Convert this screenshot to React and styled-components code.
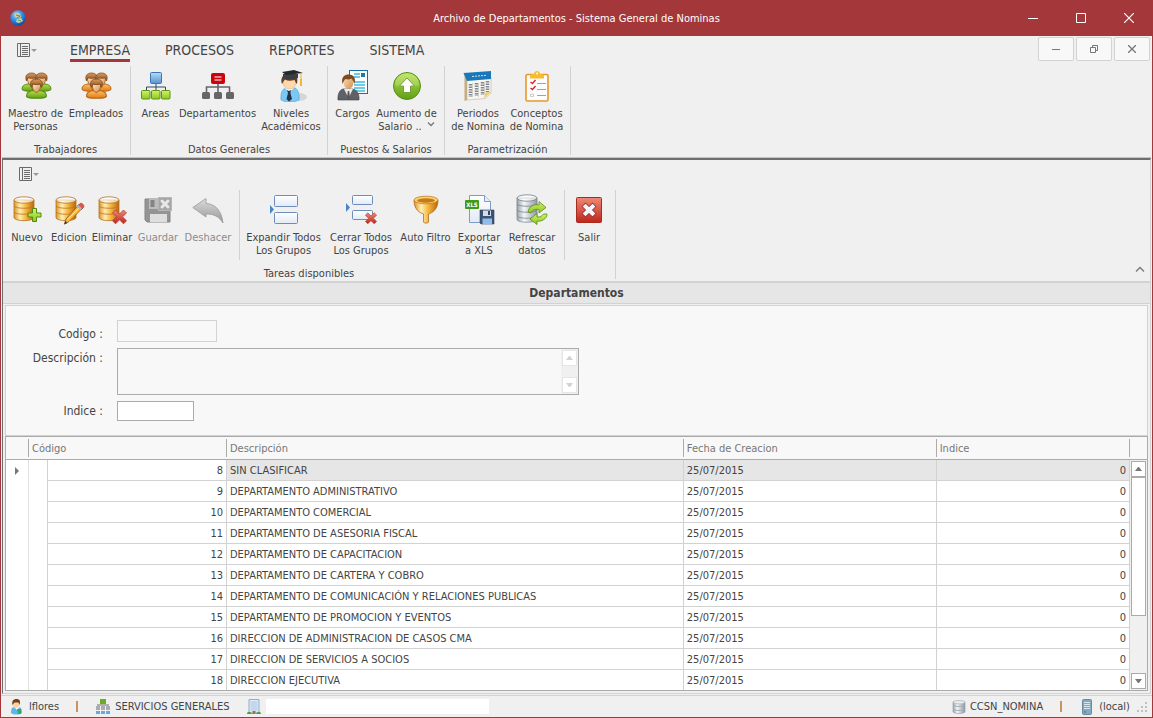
import React, {useState} from 'react';
import styled, {createGlobalStyle, css} from 'styled-components';

const GlobalStyle = createGlobalStyle`
  * {
    box-sizing: border-box;
  }
  body {
    margin: 0;
    background: #f0f0f0;
    color: #444;
    font-family: Tahoma, "DejaVu Sans Condensed", "Noto Sans", sans-serif;
    font-size: 11px;
    line-height: 13px;
  }
  button, input, textarea {
    font: inherit;
    color: inherit;
    margin: 0;
    padding: 0;
  }
  button {
    border: 0;
    background: none;
  }
  svg {
    display: block;
    flex: none;
  }
`

const Window = styled.div`
  min-height: 100vh;
  display: flex;
  flex-direction: column;
  background: #f0f0f0;
  border: 1px solid #a4373a;
  border-top: 0;
`

const TitleBar = styled.header`
  height: 36px;
  display: grid;
  grid-template-columns: 1fr auto 1fr;
  align-items: center;
  margin: 0 -1px;
  background: #a4373a;
  color: #fff;
`

const AppIcon = styled.div`
  padding-left: 10px;
`

const WindowTitle = styled.h1`
  margin: 0;
  font-size: 11px;
  font-weight: normal;
`

const WindowButtons = styled.div`
  display: flex;
  justify-content: flex-end;
`

const WindowButton = styled.button`
  width: 48px;
  height: 36px;
  display: flex;
  align-items: center;
  justify-content: center;
`

const TabBar = styled.nav`
  height: 30px;
  display: flex;
  align-items: flex-start;
  padding: 0 2px 0 16px;
`

const MenuButton = styled.button`
  width: 20px;
  height: 28px;
  display: flex;
  align-items: center;
`

const Tabs = styled.div`
  flex: 1;
  display: flex;
  gap: 35px;
  padding-left: 33px;
`

const Tab = styled.button`
  height: 26px;
  padding-top: 4px;
  font-size: 14px;
  line-height: 18px;
  border-bottom: 3px solid ${props => props.$active ? '#a4373a' : 'transparent'};
`

const MdiButtons = styled.div`
  display: flex;
  gap: 2px;
  padding-top: 1px;
`

const MdiButton = styled.button`
  width: 36px;
  height: 24px;
  display: flex;
  align-items: center;
  justify-content: center;
  background: #f8f8f8;
  border: 1px solid #d2d2d2;
  border-radius: 2px;
`

const Ribbon = styled.div`
  display: flex;
  padding-bottom: 2px;
`

const RibbonGroup = styled.section`
  border-right: 1px solid #d2d2d2;
`

const RibbonButtons = styled.div`
  display: flex;
  padding: 4px 4px 0;
`

const RibbonButton = styled.button`
  width: ${props => props.$width}px;
  height: 66px;
  display: flex;
  flex-direction: column;
  align-items: center;
  gap: 5px;
  white-space: pre;
  &:disabled {
    color: #8c8c8c;
  }
`

const GroupLabel = styled.div`
  padding-top: 9px;
  line-height: 10px;
  text-align: center;
`

const SubGroups = styled.div`
  display: flex;
`

const SubGroup = styled.div`
  display: flex;
  padding: 4px 5px 0 3px;
  & + & {
    border-left: 1px solid #d2d2d2;
  }
`

const Child = styled.main`
  flex: 1;
  display: flex;
  flex-direction: column;
  margin: 1px 1px 0;
  border: 1px solid #d2d2d2;
  border-top: 2px solid #6e6e6e;
  border-left: 1px solid #6e6e6e;
  box-shadow: 0 -1px #c4c4c4;
`

const ChildMenu = styled.div`
  height: 30px;
  padding-left: 16px;
`

const ChildRibbon = styled.div`
  display: flex;
  align-items: flex-end;
  justify-content: space-between;
  padding: 0 3px 2px 0;
  border-bottom: 2px solid #d2d2d2;
`

const CollapseButton = styled.button`
  width: 12px;
  height: 20px;
`

const SectionTitle = styled.h2`
  margin: 0;
  height: 21px;
  font-size: 12px;
  line-height: 20px;
  text-align: center;
  background: #e6e6e6;
  border-bottom: 1px solid #d2d2d2;
`

const Panel = styled.div`
  flex: 1;
  display: flex;
  flex-direction: column;
  margin: 1px 2px 2px;
`

const Form = styled.form`
  display: grid;
  grid-template-columns: 97px 1fr;
  column-gap: 14px;
  row-gap: 6px;
  align-items: start;
  padding: 14px 0;
  background: #f8f8f8;
  border: 1px solid #d2d2d2;
  font-size: 12px;
`

const Label = styled.label`
  align-self: ${props => props.$end ? 'end' : 'start'};
  padding-top: 2px;
  line-height: 16px;
  text-align: right;
  white-space: pre;
`

const fieldBorder = css`
  border: 1px solid #ababab;
  border-radius: 0;
  outline: 0;
`

const TextInput = styled.input`
  ${fieldBorder}
  width: ${props => props.$width}px;
  height: 20px;
  background: #fff;
  &:disabled {
    height: 22px;
    background: #f8f8f8;
    border-color: #d2d2d2;
  }
`

const MemoBox = styled.div`
  ${fieldBorder}
  width: 100%;
  max-width: 462px;
  height: 47px;
  display: flex;
`

const Memo = styled.textarea`
  flex: 1;
  border: 0;
  outline: 0;
  resize: none;
  overflow: hidden;
  background: #f8f8f8;
`

const MemoScroll = styled.div`
  width: 17px;
  display: flex;
  flex-direction: column;
  justify-content: space-between;
  padding: 1px;
  background: #f0f0f0;
`

const ArrowButton = styled.button`
  width: 15px;
  height: 16px;
  flex: none;
  display: flex;
  align-items: center;
  justify-content: center;
  color: ${props => props.disabled ? '#d2d2d2' : '#777'};
  background: #fff;
  border: 1px solid ${props => props.disabled ? '#e6e6e6' : '#ababab'};
`

const GridBox = styled.div`
  flex: 1;
  display: flex;
  background: #fff;
  border: 1px solid #ababab;
`

const Table = styled.table`
  flex: 1;
  width: 100%;
  align-self: flex-start;
  table-layout: fixed;
  border-collapse: separate;
  border-spacing: 0;
`

const Col = styled.col`
  width: ${props => props.$width};
`

const Th = styled.th`
  height: 23px;
  padding: 2px 0;
  font-weight: normal;
  text-align: left;
  color: #777;
  background: #f8f8f8;
  border-bottom: 1px solid #ababab;
  & > span {
    display: block;
    height: 18px;
    padding-left: 3px;
    line-height: 19px;
    border-right: 1px solid #ababab;
  }
`

const Td = styled.td`
  height: 21px;
  padding: 0 3px;
  text-align: ${props => props.$right ? 'right' : 'left'};
  white-space: nowrap;
  overflow: hidden;
  background: ${props => props.$selected ? '#e6e6e6' : '#fff'};
  border-right: 1px solid #d2d2d2;
  border-bottom: 1px solid #d2d2d2;
  tr:last-child > & {
    height: 20px;
    border-bottom: 0;
  }
`

const MarkerTd = styled.td`
  padding: 0 0 0 9px;
  border-right: 1px solid #e0e0e0;
`

const IndentTd = styled.td`
  border-right: 1px solid #d2d2d2;
`

const GridSide = styled.div`
  width: 17px;
  display: flex;
  flex-direction: column;
`

const SideHeader = styled.div`
  height: 23px;
  background: #f8f8f8;
  border-bottom: 1px solid #ababab;
`

const ScrollTrack = styled.div`
  flex: 1;
  display: flex;
  flex-direction: column;
  align-items: center;
  padding: 1px;
  background: #f0f0f0;
`

const TrackBody = styled.div`
  flex: 1;
  width: 15px;
`

const Thumb = styled.div`
  height: 71%;
  background: #fff;
  border: 1px solid #ababab;
`

const StatusBar = styled.footer`
  height: 22px;
  display: flex;
  justify-content: space-between;
  margin-top: 1px;
  border-top: 1px solid #d2d2d2;
`

const StatusSide = styled.div`
  display: flex;
  align-items: center;
  gap: 17px;
  padding: 0 4px 0 8px;
`

const StatusItem = styled.div`
  display: flex;
  align-items: center;
  gap: 4px;
`

const StatusBlank = styled.div`
  width: 223px;
  height: 15px;
  background: #fff;
`

const StatusRule = styled.div`
  width: 2px;
  height: 11px;
  background: #c8935c;
`

function Defs() {
  return (
    <svg width="0" height="0" aria-hidden="true">
      <defs>
        <linearGradient id="gold" x1="0" x2="1" y1="0" y2="0">
          <stop offset="0" stopColor="#e0912a" />
          <stop offset=".3" stopColor="#fff0b4" />
          <stop offset=".6" stopColor="#f5b53c" />
          <stop offset="1" stopColor="#b9650f" />
        </linearGradient>
        <linearGradient id="silver" x1="0" x2="1" y1="0" y2="0">
          <stop offset="0" stopColor="#9aa3ad" />
          <stop offset=".35" stopColor="#f5f7f9" />
          <stop offset="1" stopColor="#8d97a2" />
        </linearGradient>
        <linearGradient id="green" x1="0" x2="0" y1="0" y2="1">
          <stop offset="0" stopColor="#b6e04a" />
          <stop offset="1" stopColor="#5f9f16" />
        </linearGradient>
        <linearGradient id="lime" x1="0" x2="0" y1="0" y2="1">
          <stop offset="0" stopColor="#d4f06a" />
          <stop offset="1" stopColor="#8cc81e" />
        </linearGradient>
        <linearGradient id="orange" x1="0" x2="0" y1="0" y2="1">
          <stop offset="0" stopColor="#ffc062" />
          <stop offset="1" stopColor="#dd7a18" />
        </linearGradient>
        <linearGradient id="blue" x1="0" x2="0" y1="0" y2="1">
          <stop offset="0" stopColor="#b5dcf7" />
          <stop offset="1" stopColor="#5794d0" />
        </linearGradient>
        <linearGradient id="red" x1="0" x2="0" y1="0" y2="1">
          <stop offset="0" stopColor="#f08a78" />
          <stop offset="1" stopColor="#bd251b" />
        </linearGradient>
        <linearGradient id="paper" x1="0" x2="0" y1="0" y2="1">
          <stop offset="0" stopColor="#fff" />
          <stop offset="1" stopColor="#e2eaf6" />
        </linearGradient>
        <linearGradient id="grey" x1="0" x2="0" y1="0" y2="1">
          <stop offset="0" stopColor="#dcdcdc" />
          <stop offset="1" stopColor="#969696" />
        </linearGradient>
        <linearGradient id="hair" x1="0" x2="0" y1="0" y2="1">
          <stop offset="0" stopColor="#d79a5c" />
          <stop offset="1" stopColor="#8a4c1c" />
        </linearGradient>
        <linearGradient id="skin" x1="0" x2="1" y1="0" y2="1">
          <stop offset="0" stopColor="#ffe3bd" />
          <stop offset="1" stopColor="#d08d50" />
        </linearGradient>
        <radialGradient id="globe" cx=".4" cy=".3" r=".7">
          <stop offset="0" stopColor="#8fd0ff" />
          <stop offset=".6" stopColor="#2b86e0" />
          <stop offset="1" stopColor="#0b4da4" />
        </radialGradient>
      </defs>
    </svg>
  )
}

function Icon({size = 32, children}) {
  return <svg width={size} height={size} viewBox={`0 0 ${size} ${size}`} fill="none" aria-hidden="true">{children}</svg>
}

function Person({x, y, fill, stroke}) {
  return (
    <g transform={`translate(${x} ${y})`}>
      <path d="M-.5 16.500c0-4 2.500-5 6-5.500h7c3.500 .5 6 1.500 6 5.500-1.500 2.500-17.500 2.500-19 0z" fill={fill} stroke={stroke} />
      <path d="M6 10.500 9 14.500l3-4V9H6z" fill="#d9985d" />
      <path d="M5 5c0 4 1.500 7.500 4 7.500S13 9 13 5z" fill="url(#skin)" stroke="#8d5223" strokeWidth=".7" />
      <path d="M4 8C2 3 4.500 0 9 0s7 3 5 8c-.8-.5-1-2.500-1.800-3.500-2 1-4.500 1-6.300 0C5 5.500 4.800 7.500 4 8z" fill="url(#hair)" stroke="#7b431a" strokeWidth=".7" />
    </g>
  )
}

function PeopleIcon({fill, stroke}) {
  return (
    <Icon>
      <Person x={2.500} y={3} fill={fill} stroke={stroke} />
      <Person x={12.500} y={3} fill={fill} stroke={stroke} />
      <g transform="translate(7 8) scale(1.050)"><Person x={0} y={1} fill={fill} stroke={stroke} /></g>
    </Icon>
  )
}

function AreasIcon() {
  return (
    <Icon>
      <path d="M16 13v4M6.500 20v-3h19v3M16 17v3" stroke="#33486b" />
      <rect x="10.500" y="2.500" width="11" height="11" rx="1" fill="url(#blue)" stroke="#3d76b4" />
      {[1.5, 11.5, 21.5].map((x) => (
        <rect key={x} x={x} y="20.500" width="8.500" height="8.500" rx="1" fill="url(#lime)" stroke="#5c9415" />
      ))}
    </Icon>
  )
}

function DepartmentsIcon() {
  return (
    <Icon>
      <path d="M16 13v9M4.500 22v-5h23v5" stroke="#666" strokeWidth="1.600" />
      <rect x="9" y="3" width="14" height="11" rx="2" fill="#c9040c" />
      <path d="M12.500 7h7M12.500 10h7" stroke="#fff" strokeWidth="1.200" />
      {[0, 12, 24].map((x) => (
        <rect key={x} x={x} y="22" width="8" height="7" rx="1.500" fill="#666" />
      ))}
    </Icon>
  )
}

function GraduateIcon() {
  return (
    <Icon>
      <ellipse cx="24" cy="27" rx="8" ry="4" fill="#d6d6d6" />
      <path d="M6 30c-.5-7 1-11 5-12h9c3 1 4.500 6 4 12-4 2.500-14 2.500-18 0z" fill="#7cc8f5" stroke="#4ba1d6" strokeWidth=".6" />
      <path d="m10 18 4 4 5-4v-3h-8z" fill="#fff" />
      <path d="m12 20 2 1 2-1-.6 3 1.600 6-3 2.500-2.500-2.500L13 23z" fill="#21364d" />
      <ellipse cx="14.500" cy="12" rx="6.500" ry="7" fill="#ffd9ae" stroke="#dba066" strokeWidth=".5" />
      <path d="M7 14c-1.500-4 0-7 1-8h13.500c1 2 1 5 .5 8-1-1-2-2.500-2.500-4-4 1-7 1-9.500-.5C9 10.500 8 12 7 14z" fill="#6b3d1d" />
      <path d="M8 4v4.500c4 1.500 10 1 15-.5V4z" fill="#3b3e42" />
      <path d="M7 2 19 0l9 3-17 2z" fill="#25282c" />
      <path d="M26 3v8" stroke="#efb62b" />
      <path d="M25 9h2v7h-2z" fill="#f2b92f" />
    </Icon>
  )
}

function CargosIcon() {
  return (
    <Icon>
      <rect x="12.500" y=".5" width="18" height="23" fill="#fff" stroke="#1471a5" />
      <path d="M17 4h6M17 7h6M17 12h11M17 15h11M17 18h11M17 21h11" stroke="#3dbbe0" strokeWidth="1.400" />
      <path d="M24 3h4v4h-4z" fill="#1f78a8" />
      <path d="M1 30c-.5-6 1.500-10 5-11h10c4 1 6.500 5 6 11z" fill="#5e6266" stroke="#3e4144" strokeWidth=".6" />
      <path d="M7 19l4.500 9L16 19z" fill="#e9e9ec" />
      <path d="m10.800 21-.8 7 1.500 2 1.500-2-.8-7z" fill="#555" />
      <ellipse cx="11.500" cy="12" rx="5" ry="7" fill="url(#skin)" />
      <path d="M5.500 14C4 7 7 4.500 12 4.500S19 8 17.500 14c-1-2.500-1.500-4-3-5.500-2.500 1.500-4.500 1-6 .5-1.500 1-2 3-3 5z" fill="#7f4a1e" />
    </Icon>
  )
}

function RaiseIcon() {
  return (
    <Icon>
      <circle cx="16" cy="16" r="13.500" fill="url(#green)" stroke="#568d16" />
      <path d="M4 15a12 12 0 0 1 24 0c-6 3-18 3-24 0z" fill="#fff" opacity=".2" />
      <path d="m16 8-7.500 8h4v6.500h7V16h4z" fill="#fff" stroke="#618f26" strokeWidth=".8" />
    </Icon>
  )
}

function CalendarIcon() {
  return (
    <Icon>
      <path d="m2.500 3 3 1v26l-3 1z" fill="#c9ab76" />
      <path d="M5 9 29 7v16l-6 5.500L5 30z" fill="#f7f6f2" stroke="#bbb6a8" strokeWidth=".6" />
      <path d="m1.500 3 27.500-2v8L5 11z" fill="#1a78b8" />
      <path d="m10 6.500 14-1.200" stroke="#cfe6f7" strokeDasharray="2 1" />
      <path d="M8.500 14v13M14.500 13v13M20.500 12v13M25.500 11v11" stroke="#81878e" strokeWidth="3.500" strokeDasharray="1.500 1" />
      <path d="M10.500 13v14M16.500 13v14M22.500 12v12" stroke="#c9c9c4" strokeWidth=".8" />
      <path d="m29 22-7 6.500 1-6z" fill="#f4cf63" />
    </Icon>
  )
}

function ClipboardIcon() {
  return (
    <Icon>
      <rect x="5" y="4.500" width="22" height="26.500" rx="1.500" fill="#fdfdfd" stroke="#e8962b" strokeWidth="1.600" />
      <path d="M9 8.500V6c0-1 1-2 3-2h1c.5-4 5.500-4 6 0h1c2 0 3 1 3 2v2.500z" fill="#f8bd2c" />
      <circle cx="16" cy="3.500" r="1" fill="#fff" />
      <path d="M16 13.500h9M16 19.500h9M16 25.500h9" stroke="#a2a2a2" />
      <path d="m9.500 12 2 1.500 3-3.500M9.500 18l2 1.500 3-3.500" stroke="#d8232a" strokeWidth="1.400" />
      <path d="M9.500 24h3v2.500h-3z" stroke="#ccc" />
    </Icon>
  )
}

function Database({fill = 'url(#gold)', stroke = '#b57421'}) {
  return (
    <g stroke={stroke} strokeWidth=".8">
      <path d="M3 6v18c2 3.500 18 3.500 20 0V6z" fill={fill} />
      <path d="M3 12c2 3 18 3 20 0M3 18c2 3 18 3 20 0" />
      <ellipse cx="13" cy="6" rx="10" ry="3.200" fill="#fff" fillOpacity=".65" />
    </g>
  )
}

function NewIcon() {
  return (
    <Icon>
      <Database />
      <path d="M21.500 14.500h4V19H30v4h-4.500v4.500h-4V23H17v-4h4.500z" fill="url(#lime)" stroke="#528b14" />
    </Icon>
  )
}

function EditIcon() {
  return (
    <Icon>
      <Database />
      <path d="m26 10.500 3.500 3.500L16 27.500 11.500 30l1.500-5z" fill="#ffba3c" stroke="#a96317" />
      <path d="m14.500 25.500 13-13" stroke="#ffe28b" />
      <path d="m25 11.500 2-2c2-1 5 2 3.500 4l-2 2z" fill="#e0574c" stroke="#a9362b" strokeWidth=".6" />
      <path d="m24 12.500 1.500-1.500 3.500 3.500-1.500 1.500z" fill="#9cb4dd" />
      <path d="M11 30.500 14.500 29 12.500 27z" fill="#353c50" />
    </Icon>
  )
}

function RedCross({x, y}) {
  return (
    <path
      transform={`translate(${x} ${y})`}
      d="m3.500 1 4 4 4-4L14.500 4l-4 3.800 4 4-3 3-4-4-4 4-3-3 4-4L.500 4z"
      fill="url(#red)"
      stroke="#b53d31"
      strokeWidth=".8"
    />
  )
}

function DeleteIcon() {
  return (
    <Icon>
      <Database />
      <RedCross x={16} y={15} />
    </Icon>
  )
}

function SaveIcon() {
  return (
    <Icon>
      <path d="M3 5h22l3 3v20H5l-2-2z" fill="#949494" stroke="#858585" />
      <path d="M7 5h12v10H7z" fill="#bcbcbc" />
      <path d="M8.500 6h4v7h-4z" fill="#848484" />
      <path d="M8 20h17v8H8z" fill="#dedede" />
      <rect x="16.500" y="3.500" width="13" height="13" fill="#a6a6a6" stroke="#b7b7b7" />
      <path d="m20 7 6 6m0-6-6 6" stroke="#e8e8e8" strokeWidth="3" strokeLinecap="round" />
    </Icon>
  )
}

function UndoIcon() {
  return (
    <Icon>
      <path d="M.800 13.500 14 4.500v5c9 .5 15.500 6.500 17 19.500-4-6.500-9-9-17-9v3z" fill="url(#grey)" stroke="#999" strokeWidth=".8" strokeLinejoin="round" />
    </Icon>
  )
}

function ExpandIcon() {
  return (
    <Icon>
      <rect x="6.500" y="1.500" width="23" height="11" rx="1" fill="url(#paper)" stroke="#6f8dbb" />
      <rect x="6.500" y="18.500" width="23" height="11" rx="1" fill="url(#paper)" stroke="#6f8dbb" />
      <path d="m2 11 4 4.500L2 20z" fill="#4a86c6" />
    </Icon>
  )
}

function CollapseIcon() {
  return (
    <Icon>
      <rect x="7.500" y="1.500" width="20" height="9" rx="1" fill="url(#paper)" stroke="#6f8dbb" />
      <rect x="7.500" y="16.500" width="20" height="9" rx="1" fill="url(#paper)" stroke="#6f8dbb" />
      <path d="m1 9 4 4.500L1 18z" fill="#4a86c6" />
      <g transform="translate(20 18) scale(.8)"><RedCross x={0} y={0} /></g>
    </Icon>
  )
}

function FilterIcon() {
  return (
    <Icon>
      <path d="M4 6c0 7 3 12 9.500 14v8c0 1.500 5 1.500 5 0v-8C25 18 28 13 28 6z" fill="url(#gold)" stroke="#ac6112" strokeWidth=".7" />
      <ellipse cx="16" cy="6" rx="12" ry="3.800" fill="#ffd26a" stroke="#b96f14" strokeWidth=".7" />
      <ellipse cx="16" cy="6.500" rx="9" ry="2.200" fill="#c77a1b" />
    </Icon>
  )
}

const XlsText = styled.text`
  font-family: "DejaVu Sans Condensed", "Liberation Sans", sans-serif;
  font-size: 6px;
  font-weight: bold;
  fill: #fff;
`

function ExportIcon() {
  return (
    <Icon>
      <path d="M6.500 1.500h15l6 6v21h-21z" fill="url(#paper)" stroke="#7e9cc9" />
      <path d="M21.500 1.500v6h6" fill="#e6eefa" stroke="#7e9cc9" />
      <rect x="2" y="6" width="14" height="9" rx="1" fill="#3f9a16" />
      <XlsText x="9" y="13" textAnchor="middle">XLS</XlsText>
      <path d="M17 16h14v14H18l-1-1z" fill="#3b5576" stroke="#2d4361" strokeWidth=".6" />
      <path d="M20 16.500h8V22h-8z" fill="#d8dde4" />
      <path d="M25 17h2v4h-2z" fill="#34455c" />
      <path d="M19.500 24.500h9.500V30h-9.500z" fill="#8fbcea" />
    </Icon>
  )
}

function RefreshIcon() {
  return (
    <Icon>
      <g transform="translate(-2 -2)"><Database fill="url(#silver)" stroke="#76818c" /></g>
      <path d="M1 22v4c2 3 18 3 20 0v-4c-2 3-18 3-20 0z" fill="url(#silver)" stroke="#89939d" strokeWidth=".8" />
      <path d="M12 18c1-6 6-8 11-7V7.500l7 6-7 5.500v-3.500c-4-.5-6 0-8 3.500z" fill="url(#lime)" stroke="#568d16" strokeWidth=".8" />
      <path d="M31 20c0 5-6 8-10 7v3.500L14 25l7-5.500V23c3 .5 5-1 6.500-3z" fill="url(#lime)" stroke="#568d16" strokeWidth=".8" />
    </Icon>
  )
}

function ExitIcon() {
  return (
    <Icon>
      <rect x="3.500" y="3.500" width="25" height="25" rx="1" fill="url(#red)" stroke="#a92b20" />
      <path d="m12.500 12.500 7 7m0-7-7 7" stroke="#9d3028" strokeWidth="5.500" strokeLinecap="square" />
      <path d="m12.500 12.500 7 7m0-7-7 7" stroke="#f4f6fc" strokeWidth="4" strokeLinecap="square" />
    </Icon>
  )
}

function MenuIcon() {
  return (
    <svg width="20" height="14" viewBox="0 0 20 14" fill="none" aria-hidden="true">
      <path d="M.500.500h12v13H.500zM3.500 1v12M5 3.500h6M5 5.500h6M5 7.500h6M5 9.500h6M5 11.500h6" stroke="#6a6a6a" />
      <path d="M14 6h6l-3 3z" fill="#999" />
    </svg>
  )
}

function Triangle({up}) {
  return (
    <svg width="7" height="4" viewBox="0 0 7 4" aria-hidden="true">
      <path d={up ? 'M0 4h7L4 0H3z' : 'M0 0h7L4 4H3z'} fill="currentColor" />
    </svg>
  )
}

function UserIcon() {
  return (
    <Icon size={16}>
      <path d="M2 14c0-4 1-6 4-6h3c3 0 4 2 4 6-3 2-8 2-11 0z" fill="#5fb5e8" />
      <path d="m5 8 3 3 2.500-3z" fill="#fff" />
      <path d="M8 10h4v5H9z" fill="#36a86b" />
      <ellipse cx="7" cy="5" rx="3.200" ry="4" fill="#ffd2a0" />
      <path d="M3.500 6C2.500 2 4.500 0 7.500 0S12 2 10.500 6L9.500 3.500h-4z" fill="#744019" />
    </Icon>
  )
}

function OfficeIcon() {
  return (
    <Icon size={16}>
      <path d="M8 4v4M3 9V6h10v3" stroke="#b0b0b0" strokeWidth="2" />
      <path d="M5 0h6v5H5z" fill="#67ae25" />
      {[1, 6, 11].map((x) => (
        <g key={x}>
          <path d={`M${x} 7h4v4H${x}z`} fill="#a9adb0" />
          <path d={`M${x} 12h4v3H${x}z`} fill="#69a8df" />
        </g>
      ))}
    </Icon>
  )
}

function BuildingIcon() {
  return (
    <Icon size={16}>
      <path d="M3 .5h10V14H3z" fill="#dcebf9" stroke="#8eafcf" />
      <path d="M4.500 3h7M4.500 5h7M4.500 7h7M4.500 9h7M4.500 11h7" stroke="#a8c4e2" />
      <path d="M6.500 12h3v3h-3z" fill="#a26f4c" />
      <path d="M1 15c0-3 4-3 5 0zM10 15c1-3 5-3 5 0z" fill="#5e9a2d" />
    </Icon>
  )
}

function SmallDbIcon() {
  return (
    <Icon size={14}>
      <path d="M1 2v10c2 2 10 2 12 0V2z" fill="url(#silver)" stroke="#919aa3" strokeWidth=".6" />
      <path d="M1 5c2 2 10 2 12 0M1 9c2 2 10 2 12 0" stroke="#a2abb3" />
      <ellipse cx="7" cy="2.200" rx="6" ry="1.700" fill="#e8ecef" stroke="#919aa3" strokeWidth=".5" />
    </Icon>
  )
}

function ServerIcon() {
  return (
    <Icon size={16}>
      <rect x="3.500" y=".5" width="9" height="15" rx="1" fill="#86aabd" stroke="#688ba0" />
      <path d="M5 3.500h6M5 5.500h6M5 7.500h6M5 9.500h6" stroke="#d8e7ee" />
      <path d="M5 13h2" stroke="#46677a" />
    </Icon>
  )
}

const groups = [
  {
    label: 'Trabajadores',
    items: [
      {text: 'Maestro de\nPersonas', width: 61, icon: <PeopleIcon fill="url(#green)" stroke="#568a1b" />},
      {text: 'Empleados', width: 60, icon: <PeopleIcon fill="url(#orange)" stroke="#b76318" />},
    ],
  },
  {
    label: 'Datos Generales',
    items: [
      {text: 'Areas', width: 41, icon: <AreasIcon />},
      {text: 'Departamentos', width: 83, icon: <DepartmentsIcon />},
      {text: 'Niveles\nAcadémicos', width: 64, icon: <GraduateIcon />},
    ],
  },
  {
    label: 'Puestos & Salarios',
    items: [
      {text: 'Cargos', width: 41, icon: <CargosIcon />},
      {text: 'Aumento de\nSalario ..', width: 67, icon: <RaiseIcon />, more: true},
    ],
  },
  {
    label: 'Parametrización',
    items: [
      {text: 'Periodos\nde Nomina', width: 58, icon: <CalendarIcon />},
      {text: 'Conceptos\nde Nomina', width: 59, icon: <ClipboardIcon />},
    ],
  },
]

const tasks = [
  [
    {text: 'Nuevo', width: 42, icon: <NewIcon />},
    {text: 'Edicion', width: 42, icon: <EditIcon />},
    {text: 'Eliminar', width: 44, icon: <DeleteIcon />},
    {text: 'Guardar', width: 48, icon: <SaveIcon />, disabled: true},
    {text: 'Deshacer', width: 52, icon: <UndoIcon />, disabled: true},
  ],
  [
    {text: 'Expandir Todos\nLos Grupos', width: 81, icon: <ExpandIcon />},
    {text: 'Cerrar Todos\nLos Grupos', width: 74, icon: <CollapseIcon />},
    {text: 'Auto Filtro', width: 55, icon: <FilterIcon />},
    {text: 'Exportar\na XLS', width: 52, icon: <ExportIcon />},
    {text: 'Refrescar\ndatos', width: 54, icon: <RefreshIcon />},
  ],
  [
    {text: 'Salir', width: 42, icon: <ExitIcon />},
  ],
]

const departments = [
  {code: 8, name: 'SIN CLASIFICAR'},
  {code: 9, name: 'DEPARTAMENTO ADMINISTRATIVO'},
  {code: 10, name: 'DEPARTAMENTO COMERCIAL'},
  {code: 11, name: 'DEPARTAMENTO DE ASESORIA FISCAL'},
  {code: 12, name: 'DEPARTAMENTO DE CAPACITACION'},
  {code: 13, name: 'DEPARTAMENTO DE CARTERA Y COBRO'},
  {code: 14, name: 'DEPARTAMENTO DE COMUNICACIÓN Y RELACIONES PUBLICAS'},
  {code: 15, name: 'DEPARTAMENTO DE PROMOCION Y EVENTOS'},
  {code: 16, name: 'DIRECCION DE ADMINISTRACION DE CASOS CMA'},
  {code: 17, name: 'DIRECCION DE SERVICIOS A SOCIOS'},
  {code: 18, name: 'DIRECCION EJECUTIVA'},
]

const MoreMark = styled.span`
  display: inline-block;
  margin-left: 5px;
  vertical-align: 3px;
  line-height: 5px;
`

function Command({item}) {
  return (
    <RibbonButton type="button" $width={item.width} disabled={item.disabled}>
      {item.icon}
      <span>
        {item.text}
        {item.more && (
          <MoreMark>
            <svg width="8" height="5" viewBox="0 0 8 5" fill="none" aria-hidden="true">
              <path d="m1 .5 3 3 3-3" stroke="#777" strokeWidth="1.300" />
            </svg>
          </MoreMark>
        )}
      </span>
    </RibbonButton>
  )
}

function Title() {
  return (
    <TitleBar>
      <AppIcon>
        <Icon size={16}>
          <circle cx="8" cy="8" r="7.700" fill="url(#globe)" />
          <path d="M4 4c2-2 5-1 6 0l1 3-3 1-3-1zM7 9l4-1 2 3-4 2-3-1z" fill="#d6cf8d" />
          <path d="m6 5 4 1-3 2M8 10l3 1" stroke="#3f9a75" />
        </Icon>
      </AppIcon>
      <WindowTitle>Archivo de Departamentos - Sistema General de Nominas</WindowTitle>
      <WindowButtons>
        <WindowButton type="button" aria-label="Minimizar">
          <Icon size={10}><path d="M0 5.500h10" stroke="#fff" /></Icon>
        </WindowButton>
        <WindowButton type="button" aria-label="Maximizar">
          <Icon size={10}><path d="M.500.500h9v9h-9z" stroke="#fff" /></Icon>
        </WindowButton>
        <WindowButton type="button" aria-label="Cerrar">
          <Icon size={10}><path d="m0 0 10 10M10 0 0 10" stroke="#fff" strokeWidth="1.200" /></Icon>
        </WindowButton>
      </WindowButtons>
    </TitleBar>
  )
}

function Navigation({tab, setTab}) {
  return (
    <TabBar>
      <MenuButton type="button" aria-label="Menú"><MenuIcon /></MenuButton>
      <Tabs>
        {['EMPRESA', 'PROCESOS', 'REPORTES', 'SISTEMA'].map((name) => (
          <Tab key={name} type="button" $active={tab === name} onClick={() => setTab(name)}>{name}</Tab>
        ))}
      </Tabs>
      <MdiButtons>
        <MdiButton type="button" aria-label="Minimizar">
          <Icon size={8}><path d="M0 4.500h8" stroke="#777" /></Icon>
        </MdiButton>
        <MdiButton type="button" aria-label="Restaurar">
          <Icon size={8}><path d="M.500 2.500h5v5h-5zM2.500 2.500v-2h5v5h-2" stroke="#777" /></Icon>
        </MdiButton>
        <MdiButton type="button" aria-label="Cerrar">
          <Icon size={8}><path d="m0 0 8 8M8 0 0 8" stroke="#777" strokeWidth="1.300" /></Icon>
        </MdiButton>
      </MdiButtons>
    </TabBar>
  )
}

function DepartmentForm() {
  return (
    <Form>
      <Label htmlFor="codigo" $end>Codigo :</Label>
      <TextInput id="codigo" $width={100} disabled />
      <Label htmlFor="descripcion">Descripción :</Label>
      <MemoBox>
        <Memo id="descripcion" readOnly />
        <MemoScroll>
          <ArrowButton type="button" aria-label="Subir" disabled><Triangle up /></ArrowButton>
          <ArrowButton type="button" aria-label="Bajar" disabled><Triangle /></ArrowButton>
        </MemoScroll>
      </MemoBox>
      <Label htmlFor="indice">Indice :</Label>
      <TextInput id="indice" $width={77} />
    </Form>
  )
}

function DepartmentGrid() {
  const [selected, setSelected] = useState(8)

  return (
    <GridBox>
      <Table>
        <colgroup>
          <Col $width="23px" />
          <Col $width="19px" />
          <Col $width="179px" />
          <Col />
          <Col $width="22.5%" />
          <Col $width="17.2%" />
        </colgroup>
        <thead>
          <tr>
            <Th aria-label="Fila"><span /></Th>
            <Th colSpan={2}><span>Código</span></Th>
            <Th><span>Descripción</span></Th>
            <Th><span>Fecha de Creacion</span></Th>
            <Th><span>Indice</span></Th>
          </tr>
        </thead>
        <tbody>
          {departments.map(({code, name}) => (
            <tr key={code} onClick={() => setSelected(code)}>
              <MarkerTd>
                {selected === code && (
                  <svg width="5" height="8" viewBox="0 0 5 8" aria-hidden="true"><path d="M0 0l4 4-4 4z" fill="#777" /></svg>
                )}
              </MarkerTd>
              <IndentTd />
              <Td $right>{code}</Td>
              <Td $selected={selected === code}>{name}</Td>
              <Td $selected={selected === code}>25/07/2015</Td>
              <Td $selected={selected === code} $right>0</Td>
            </tr>
          ))}
        </tbody>
      </Table>
      <GridSide>
        <SideHeader />
        <ScrollTrack>
          <ArrowButton type="button" aria-label="Subir"><Triangle up /></ArrowButton>
          <TrackBody><Thumb /></TrackBody>
          <ArrowButton type="button" aria-label="Bajar"><Triangle /></ArrowButton>
        </ScrollTrack>
      </GridSide>
    </GridBox>
  )
}

function Status() {
  return (
    <StatusBar>
      <StatusSide>
        <StatusItem><UserIcon />lflores</StatusItem>
        <StatusRule />
        <StatusItem><OfficeIcon />SERVICIOS GENERALES</StatusItem>
        <StatusItem><BuildingIcon /><StatusBlank /></StatusItem>
      </StatusSide>
      <StatusSide>
        <StatusItem><SmallDbIcon />CCSN_NOMINA</StatusItem>
        <StatusRule />
        <StatusItem>
          <ServerIcon />
          (local)
          <Icon size={14}>
            <path d="M11 2h2v2h-2zM7 6h2v2H7zM11 6h2v2h-2zM3 10h2v2H3zM7 10h2v2H7zM11 10h2v2h-2z" fill="#c0c0c0" />
          </Icon>
        </StatusItem>
      </StatusSide>
    </StatusBar>
  )
}

export default function App() {
  const [tab, setTab] = useState('EMPRESA')

  return (
    <Window>
      <GlobalStyle />
      <Title />
      <Navigation tab={tab} setTab={setTab} />
      <Ribbon>
        {groups.map((group) => (
          <RibbonGroup key={group.label}>
            <RibbonButtons>
              {group.items.map((item) => <Command key={item.text} item={item} />)}
            </RibbonButtons>
            <GroupLabel>{group.label}</GroupLabel>
          </RibbonGroup>
        ))}
      </Ribbon>
      <Child>
        <ChildMenu>
          <MenuButton type="button" aria-label="Menú"><MenuIcon /></MenuButton>
        </ChildMenu>
        <ChildRibbon>
          <RibbonGroup>
            <SubGroups>
              {tasks.map((items) => (
                <SubGroup key={items[0].text}>
                  {items.map((item) => <Command key={item.text} item={item} />)}
                </SubGroup>
              ))}
            </SubGroups>
            <GroupLabel>Tareas disponibles</GroupLabel>
          </RibbonGroup>
          <CollapseButton type="button" aria-label="Contraer">
            <svg width="10" height="7" viewBox="0 0 10 7" fill="none" aria-hidden="true">
              <path d="m1 5.500 4-4 4 4" stroke="#777" strokeWidth="1.300" />
            </svg>
          </CollapseButton>
        </ChildRibbon>
        <SectionTitle>Departamentos</SectionTitle>
        <Panel>
          <DepartmentForm />
          <DepartmentGrid />
        </Panel>
      </Child>
      <Status />
      <Defs />
    </Window>
  )
}
